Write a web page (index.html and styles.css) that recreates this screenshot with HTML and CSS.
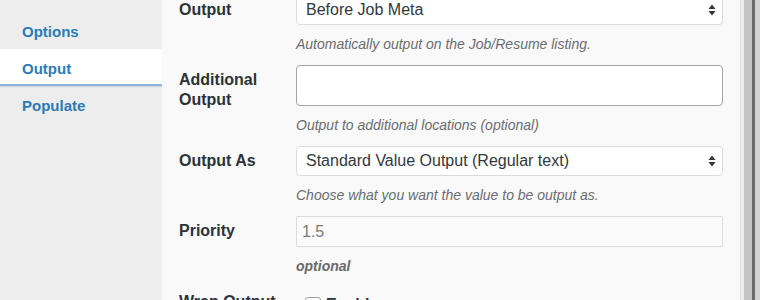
FILE: index.html
```html
<!DOCTYPE html>
<html lang="en">
<head>
<meta charset="utf-8">
<title>Field Output</title>
<link rel="stylesheet" href="styles.css">
</head>
<body>
<div class="app">
  <nav class="sidebar">
    <a class="tab">Options</a>
    <a class="tab active">Output</a>
    <a class="tab">Populate</a>
  </nav>
  <main class="panel">
    <div class="form">
      <div class="row">
        <div class="label">Output</div>
        <div class="field">
          <div class="select">
            <span>Before Job Meta</span>
            <svg class="arrows" width="8" height="12" viewBox="0 0 8 12"><polygon points="4,0.5 7.5,5 0.5,5" fill="#333"/><polygon points="0.5,7 7.5,7 4,11.5" fill="#333"/></svg>
          </div>
          <p class="desc">Automatically output on the Job/Resume listing.</p>
        </div>
      </div>
      <div class="row">
        <div class="label">Additional Output</div>
        <div class="field">
          <div class="multi"></div>
          <p class="desc">Output to additional locations (optional)</p>
        </div>
      </div>
      <div class="row">
        <div class="label">Output As</div>
        <div class="field">
          <div class="select">
            <span>Standard Value Output (Regular text)</span>
            <svg class="arrows" width="8" height="12" viewBox="0 0 8 12"><polygon points="4,0.5 7.5,5 0.5,5" fill="#333"/><polygon points="0.5,7 7.5,7 4,11.5" fill="#333"/></svg>
          </div>
          <p class="desc">Choose what you want the value to be output as.</p>
        </div>
      </div>
      <div class="row">
        <div class="label">Priority</div>
        <div class="field">
          <div class="text-input">1.5</div>
          <p class="desc strong">optional</p>
        </div>
      </div>
      <div class="row">
        <div class="label">Wrap Output</div>
        <div class="field check-field">
          <span class="checkbox"><svg width="14" height="14" viewBox="0 0 14 14"><path d="M3 7.5 L6 10.5 L11.5 3" fill="none" stroke="#1e8cbe" stroke-width="2.2"/></svg></span>
          <span class="check-label">Enable</span>
        </div>
      </div>
    </div>
  </main>
  <div class="edge">
    <span class="strip s1"></span>
    <span class="strip s2"></span>
    <span class="strip s3"></span>
    <span class="strip s4"></span>
  </div>
</div>
</body>
</html>
```
FILE: styles.css
```css
html, body {
  margin: 0;
  padding: 0;
}
body {
  width: 760px;
  height: 300px;
  overflow: hidden;
  font-family: "Liberation Sans", Arial, sans-serif;
  background: #f9f9f9;
}
.app {
  display: flex;
  height: 300px;
  overflow: hidden;
}
.sidebar {
  width: 162px;
  flex: none;
  background: #ededed;
  padding-top: 12px;
  display: flex;
  flex-direction: column;
}
.tab {
  display: block;
  box-sizing: border-box;
  height: 37px;
  line-height: 30px;
  padding: 5px 22px 0;
  font-size: 15px;
  font-weight: bold;
  color: #2b7bb7;
  border-bottom: 2px solid transparent;
}
.tab.active {
  background: #ffffff;
  border-bottom-color: #8ab6da;
  box-shadow: 0 1px 1px rgba(120, 160, 200, 0.25);
}
.panel {
  width: 561px;
  flex: none;
  background: #f9f9f9;
  border-right: 1px solid #dedede;
  padding: 0 0 0 17px;
}
.form {
  margin-top: -5px;
}
.row {
  display: grid;
  grid-template-columns: 117px 427px;
  margin-bottom: 11px;
}
.label {
  padding-top: 5px;
  line-height: 20px;
  font-size: 16px;
  font-weight: bold;
  color: #2c3338;
}
.field {
  display: flex;
  flex-direction: column;
}
.select {
  box-sizing: border-box;
  height: 30px;
  border: 1px solid #dcdcdc;
  border-radius: 4px;
  background: #ffffff;
  display: flex;
  align-items: center;
  justify-content: space-between;
  padding: 0 6px 0 9px;
  font-size: 16px;
  color: #32373c;
}
.arrows {
  display: block;
}
.multi {
  box-sizing: border-box;
  height: 41px;
  border: 1px solid #a5a5a5;
  border-radius: 4px;
  background: #ffffff;
}
.text-input {
  box-sizing: border-box;
  height: 31px;
  border: 1px solid #dddddd;
  border-radius: 1px;
  background: #fbfbfb;
  display: flex;
  align-items: center;
  padding-left: 5px;
  font-size: 16px;
  color: #7a7a7a;
}
.desc {
  margin: 9px 0 0;
  line-height: 20px;
  font-size: 14px;
  font-style: italic;
  color: #6a6e72;
}
.desc.strong {
  font-weight: bold;
  color: #6a6a6a;
}
.check-field {
  flex-direction: row;
  align-items: flex-start;
  padding: 10px 0 0 9px;
}
.checkbox {
  box-sizing: border-box;
  width: 16px;
  height: 16px;
  border: 1px solid #9a9ea3;
  border-radius: 3px;
  background: #ffffff;
  display: flex;
  align-items: center;
  justify-content: center;
  margin-right: 5px;
}
.check-label {
  font-size: 16px;
  font-weight: bold;
  line-height: 16px;
  color: #2c3338;
}
.edge {
  flex: 1;
  display: flex;
}
.strip {
  display: block;
  height: 300px;
}
.s1 { width: 3px; background: #ececec; }
.s2 { width: 8px; background: #c4c4c4; }
.s3 { width: 3px; background: #6a6a6a; }
.s4 { flex: 1; background: #d2d2d2; }
```
